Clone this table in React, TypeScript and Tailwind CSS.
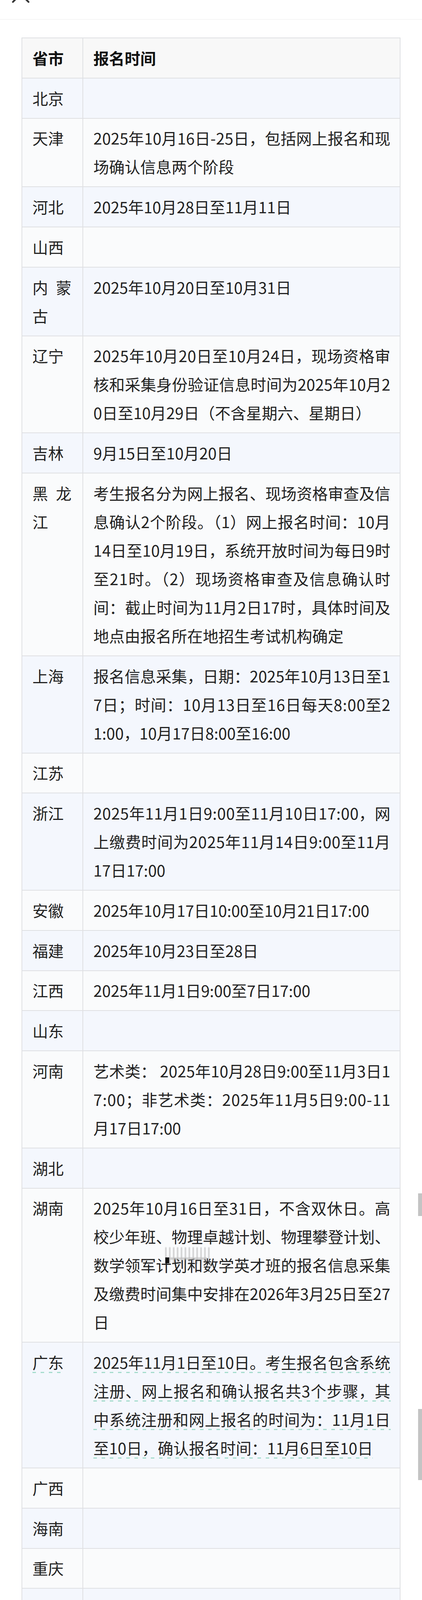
import { useLayoutEffect, useRef, useState, type ReactNode } from "react";

type Row = {
  name: string[];
  lines: string[];
  dashed?: boolean;
  smudge?: boolean;
};

const rows: Row[] = [
  { name: ["北京"], lines: [] },
  {
    name: ["天津"],
    lines: ["2025年10月16日-25日，包括网上报名和现", "场确认信息两个阶段"],
  },
  { name: ["河北"], lines: ["2025年10月28日至11月11日"] },
  { name: ["山西"], lines: [] },
  { name: ["内蒙", "古"], lines: ["2025年10月20日至10月31日"] },
  {
    name: ["辽宁"],
    lines: [
      "2025年10月20日至10月24日，现场资格审",
      "核和采集身份验证信息时间为2025年10月2",
      "0日至10月29日（不含星期六、星期日）",
    ],
  },
  { name: ["吉林"], lines: ["9月15日至10月20日"] },
  {
    name: ["黑龙", "江"],
    lines: [
      "考生报名分为网上报名、现场资格审查及信",
      "息确认2个阶段。（1）网上报名时间：10月",
      "14日至10月19日，系统开放时间为每日9时",
      "至21时。（2）现场资格审查及信息确认时",
      "间：截止时间为11月2日17时，具体时间及",
      "地点由报名所在地招生考试机构确定",
    ],
  },
  {
    name: ["上海"],
    lines: [
      "报名信息采集，日期：2025年10月13日至1",
      "7日；时间：10月13日至16日每天8:00至2",
      "1:00，10月17日8:00至16:00",
    ],
  },
  { name: ["江苏"], lines: [] },
  {
    name: ["浙江"],
    lines: [
      "2025年11月1日9:00至11月10日17:00，网",
      "上缴费时间为2025年11月14日9:00至11月",
      "17日17:00",
    ],
  },
  { name: ["安徽"], lines: ["2025年10月17日10:00至10月21日17:00"] },
  { name: ["福建"], lines: ["2025年10月23日至28日"] },
  { name: ["江西"], lines: ["2025年11月1日9:00至7日17:00"] },
  { name: ["山东"], lines: [] },
  {
    name: ["河南"],
    lines: [
      "艺术类： 2025年10月28日9:00至11月3日1",
      "7:00；非艺术类：2025年11月5日9:00-11",
      "月17日17:00",
    ],
  },
  { name: ["湖北"], lines: [] },
  {
    name: ["湖南"],
    smudge: true,
    lines: [
      "2025年10月16日至31日，不含双休日。高",
      "校少年班、物理卓越计划、物理攀登计划、",
      "数学领军计划和数学英才班的报名信息采集",
      "及缴费时间集中安排在2026年3月25日至27",
      "日",
    ],
  },
  {
    name: ["广东"],
    dashed: true,
    lines: [
      "2025年11月1日至10日。考生报名包含系统",
      "注册、网上报名和确认报名共3个步骤，其",
      "中系统注册和网上报名的时间为：11月1日",
      "至10日，确认报名时间：11月6日至10日",
    ],
  },
  { name: ["广西"], lines: [] },
  { name: ["海南"], lines: [] },
  { name: ["重庆"], lines: [] },
  { name: ["四川"], lines: [] },
  { name: ["贵州"], lines: [] },
  { name: ["云南"], lines: [] },
  { name: ["西藏"], lines: [] },
  { name: ["陕西"], lines: [] },
  {
    name: ["甘肃"],
    lines: [
      "“网上报名”环节定于10月21日至27日进行。",
      "“现场确认及资格审查”于11月15日前完成",
      "（其中艺术类考生须于11月5日前完成）",
    ],
  },
  { name: ["青海"], lines: [] },
  { name: ["宁夏"], lines: [] },
  {
    name: ["新疆"],
    lines: [
      "网上报名系统将于2025年10月16日中午12",
      "时开通，具体报名时间由各地（州、市）教",
      "育考试机构另行通知。报考艺术类考生须在",
      "2025年11月5日18时前完成网上报名及缴",
      "费，其他考生须在2025年11月20日18时前",
      "完成网上报名",
    ],
  },
];

// scroll indicator leftovers on the right edge of the long screenshot
const scrollMarks = [
  { top: 3055, h: 58 },
  { top: 3607, h: 182 },
  { top: 4162, h: 246 },
  { top: 4718, h: 360 },
  { top: 5346, h: 410 },
];

// curly quotes are narrow in the original, so they get a latin face
function withQuotes(text: string) {
  return text.split(/([“”])/).map((part, i) =>
    part === "“" || part === "”" ? (
      <span key={i} className="font-['Noto_Sans',sans-serif]">
        {part}
      </span>
    ) : (
      part
    )
  );
}

// one visual line; spreads its characters to the box width when justified
function FitLine({
  text,
  justify = false,
  dashed = false,
  className = "",
  children,
}: {
  text: string;
  justify?: boolean;
  dashed?: boolean;
  className?: string;
  children?: ReactNode;
}) {
  const boxRef = useRef<HTMLDivElement>(null);
  const spanRef = useRef<HTMLSpanElement>(null);
  const [spacing, setSpacing] = useState(0);

  useLayoutEffect(() => {
    let alive = true;
    const fit = () => {
      const box = boxRef.current;
      const span = spanRef.current;
      if (!alive || !box || !span) return;
      const n = Array.from(text).length;
      const prev = parseFloat(span.style.letterSpacing) || 0;
      const natural = span.getBoundingClientRect().width - prev * n;
      const avail = box.clientWidth;
      let next = 0;
      if (n > 1 && (justify || natural > avail)) {
        next = (avail - natural) / (n - 1);
      }
      setSpacing(next);
    };
    fit();
    document.fonts?.ready.then(fit);
    return () => {
      alive = false;
    };
  }, [text, justify]);

  return (
    <div ref={boxRef} className={`relative whitespace-nowrap ${className}`}>
      <span
        ref={spanRef}
        className={
          dashed
            ? "inline-block bg-[image:repeating-linear-gradient(90deg,#a5dccd_0_9px,transparent_9px_21px)] bg-[length:100%_3px] bg-[position:0_61px] bg-no-repeat"
            : "inline-block"
        }
        style={{ letterSpacing: `${spacing}px` }}
      >
        {withQuotes(text)}
      </span>
      {children}
    </div>
  );
}

function Smudge() {
  return (
    <div className="absolute left-[184px] top-[-9px] h-[43px] w-[117px] pointer-events-none">
      <div className="absolute inset-0 bg-[image:repeating-linear-gradient(90deg,rgba(60,60,60,0.28)_0_3px,transparent_3px_10px)] blur-[1px]" />
      <div className="absolute left-[10px] top-[26px] h-[6px] w-[97px] bg-[#bdbdbd] opacity-70 blur-[1px]" />
      <div className="absolute left-0 top-[26px] h-[15px] w-[10px] bg-[#111]" />
    </div>
  );
}

function TableRow({ row, index }: { row: Row; index: number }) {
  const bg = index % 2 === 0 ? "bg-[#f4f7fd]" : "bg-[#fafbfc]";
  return (
    <div className={`flex border-t-2 border-[#dfe0e3] ${bg}`}>
      <div className="w-[154px] flex-none pl-[26px] pr-[28px] py-[13.875px]">
        {row.name.map((t, i) => (
          <FitLine
            key={t}
            text={t}
            justify={i < row.name.length - 1}
            dashed={row.dashed}
          />
        ))}
      </div>
      <div className="min-w-0 flex-1 border-l-2 border-[#dfe0e3] pl-[26px] pr-[24px] py-[13.875px]">
        {row.lines.map((t, i) => (
          <FitLine
            key={t}
            text={t}
            justify={i < row.lines.length - 1}
            dashed={row.dashed}
          >
            {row.smudge && i === 2 ? <Smudge /> : null}
          </FitLine>
        ))}
      </div>
    </div>
  );
}

export default function App() {
  return (
    <div className="relative h-[5756px] w-[1080px] overflow-hidden bg-white font-['Noto_Sans_CJK_SC','Noto_Sans',sans-serif] text-[#222]">
      <div className="relative h-[50px] border-b border-[#ebebeb]">
        <svg
          className="absolute left-[28px] top-[-40px]"
          width="50"
          height="50"
          viewBox="0 0 50 50"
          fill="none"
          stroke="#333"
          strokeWidth="4.5"
          strokeLinecap="round"
        >
          <path d="M5 5L45 45M45 5L5 45" />
        </svg>
      </div>

      <div className="mx-[55px] mt-[46px] border-x-2 border-b-2 border-[#dfe0e3] text-[40px] leading-[73px]">
        <div className="flex border-t-2 border-[#dfe0e3] bg-[#f8f8f8] font-bold text-[#111]">
          <div className="w-[154px] flex-none pl-[26px] pr-[28px] py-[13.875px]">
            <FitLine text="省市" />
          </div>
          <div className="min-w-0 flex-1 border-l-2 border-[#dfe0e3] pl-[26px] pr-[24px] py-[13.875px]">
            <FitLine text="报名时间" />
          </div>
        </div>
        {rows.map((row, i) => (
          <TableRow key={row.name.join("")} row={row} index={i} />
        ))}
      </div>

      <div className="mx-[55px] mt-[43px] text-[44px] font-bold leading-[88px] text-[#111]">
        <FitLine text="注：以上日程如有变动，以省招办公布的最新信" justify />
        <FitLine text="息为准。" />
      </div>

      {scrollMarks.map((m) => (
        <div
          key={m.top}
          className="absolute right-0 w-[10px] bg-[#c4c4c4]"
          style={{ top: m.top, height: m.h }}
        />
      ))}
    </div>
  );
}
